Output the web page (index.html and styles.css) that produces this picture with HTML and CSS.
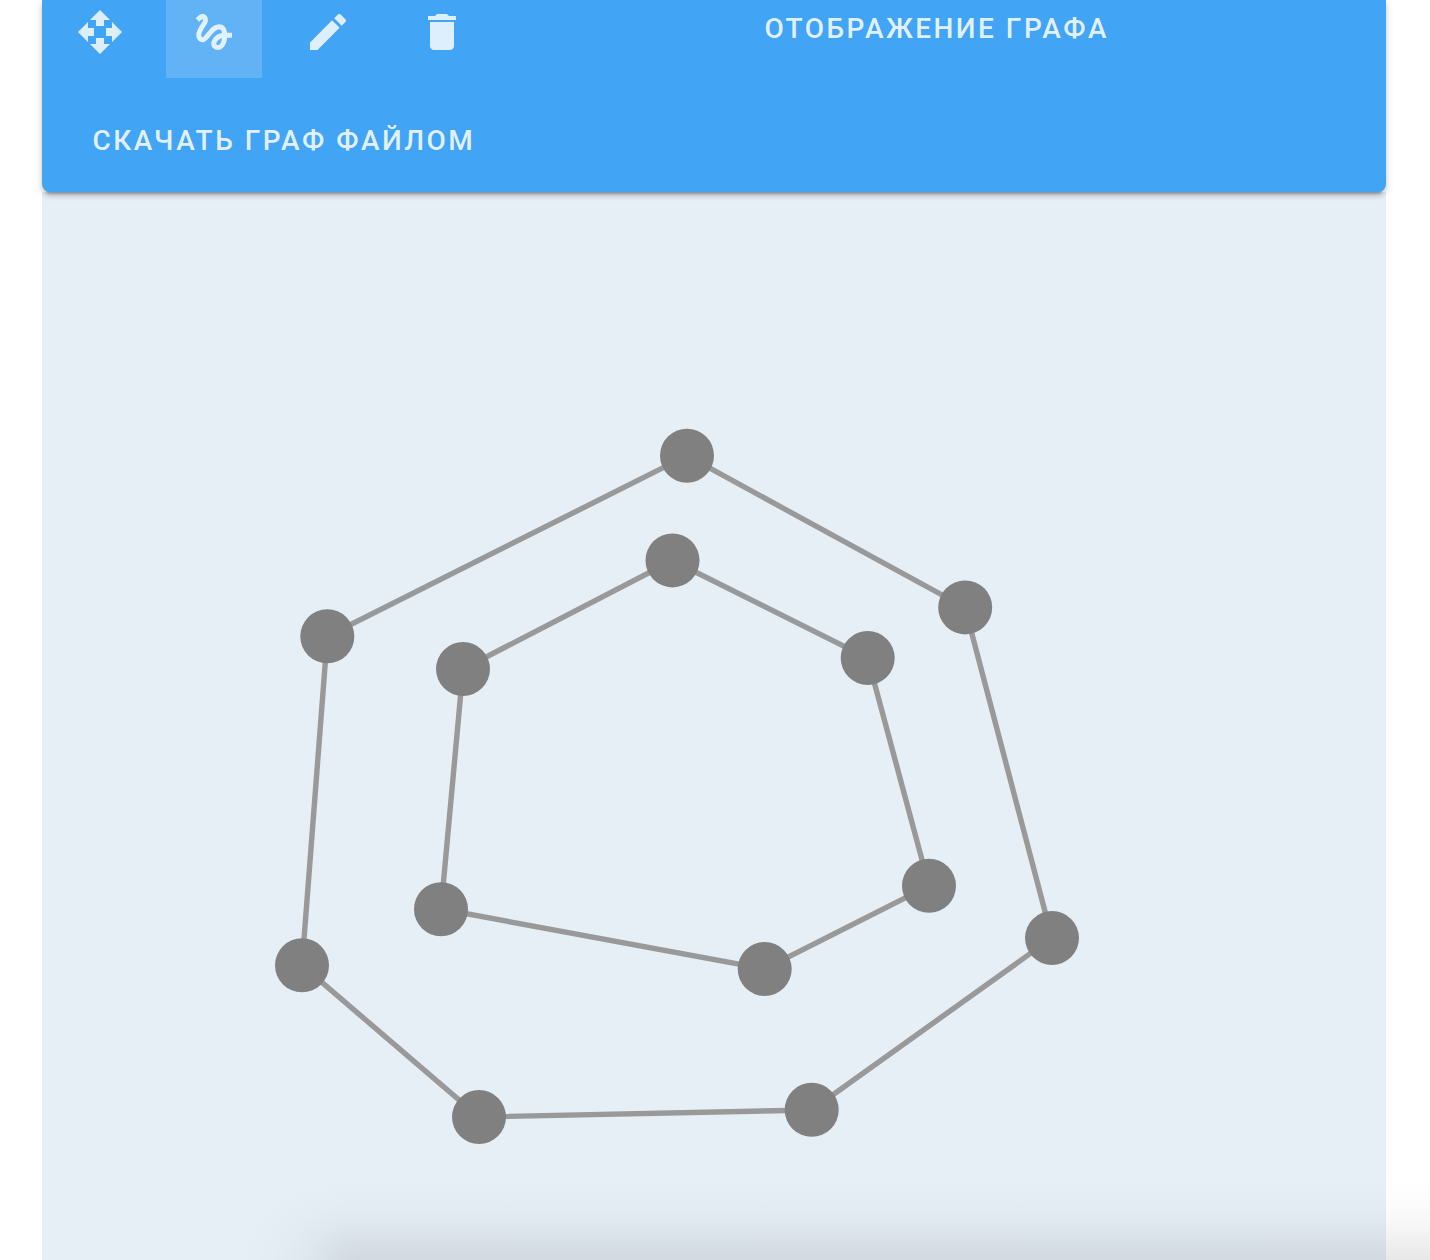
FILE: index.html
```html
<!DOCTYPE html>
<html lang="ru">
<head>
<meta charset="utf-8">
<title>Граф</title>
<link rel="stylesheet" href="styles.css">
</head>
<body>
<main class="editor">
  <header class="toolbar">
    <div class="tools-row">
      <div class="tools">
        <button class="tool" aria-label="Переместить"><svg class="icon" viewBox="0 0 24 24"><path d="M10 9h4V6h3l-5-5-5 5h3v3zm-1 1H6V7l-5 5 5 5v-3h3v-4zm14 2l-5-5v3h-3v4h3v3l5-5zm-9 3h-4v3H7l5 5 5-5h-3v-3z"/></svg></button>
        <button class="tool tool-active" aria-label="Рисовать"><svg class="icon" viewBox="0 0 24 24"><path d="M4.59 6.89c.7-.71 1.4-1.35 1.71-1.22.5.2 0 1.03-.3 1.52-.25.42-2.86 3.89-2.86 6.31 0 1.28.48 2.34 1.34 2.98.75.56 1.74.73 2.64.46 1.07-.31 1.95-1.4 3.06-2.77 1.21-1.49 2.83-3.44 4.08-3.44 1.63 0 1.65 1.01 1.76 1.79-3.78.64-5.38 3.67-5.38 5.37 0 1.7 1.44 3.09 3.21 3.09 1.63 0 4.29-1.33 4.69-6.1H21v-2.5h-2.47c-.15-1.65-1.09-4.2-4.03-4.2-2.25 0-4.18 1.91-4.94 2.84-.58.73-2.06 2.48-2.29 2.72-.25.3-.68.84-1.11.84-.45 0-.72-.83-.36-1.92.35-1.09 1.4-2.86 1.85-3.52.78-1.14 1.3-1.92 1.3-3.28C8.95 3.69 7.31 3 6.44 3 5.12 3 3.97 4 3.72 4.25c-.36.36-.66.66-.88.93l1.75 1.71zm9.29 11.66c-.31 0-.74-.26-.74-.72 0-.6.73-2.2 2.87-2.76-.3 2.69-1.43 3.48-2.13 3.48z"/></svg></button>
        <button class="tool" aria-label="Изменить"><svg class="icon" viewBox="0 0 24 24"><path d="M20.71,7.04C21.1,6.65 21.1,6 20.71,5.63L18.37,3.29C18,2.9 17.35,2.9 16.96,3.29L15.12,5.12L18.87,8.87M3,17.25V21H6.75L17.81,9.93L14.06,6.18L3,17.25Z"/></svg></button>
        <button class="tool" aria-label="Удалить"><svg class="icon" viewBox="0 0 24 24"><path d="M6 19c0 1.1.9 2 2 2h8c1.1 0 2-.9 2-2V7H6v12zM19 4h-3.5l-1-1h-5l-1 1H5v2h14V4z"/></svg></button>
      </div>
      <button class="text-button view-button">Отображение графа</button>
    </div>
    <button class="text-button download-button">Скачать граф файлом</button>
  </header>
  <svg class="graph" viewBox="42 192 1344 1068">
    <g class="edges">
      <path d="M687 455.7 965 607.5 1052 938 811.7 1110 479 1117 302 965.3 327.3 636.3Z"/>
      <path d="M672.5 560.5 867.7 658 929 885.8 764.7 969 441 909 463 669Z"/>
    </g>
    <g class="nodes">
      <circle cx="687" cy="455.7" r="27"/>
      <circle cx="965.2" cy="607.4" r="27"/>
      <circle cx="1052" cy="938" r="27"/>
      <circle cx="811.7" cy="1109.8" r="27"/>
      <circle cx="479" cy="1117" r="27"/>
      <circle cx="302" cy="965.3" r="27"/>
      <circle cx="327.3" cy="636.3" r="27"/>
      <circle cx="672.5" cy="560.4" r="27"/>
      <circle cx="867.7" cy="658" r="27"/>
      <circle cx="929" cy="885.8" r="27"/>
      <circle cx="764.7" cy="969" r="27"/>
      <circle cx="441" cy="909.2" r="27"/>
      <circle cx="463" cy="669" r="27"/>
    </g>
  </svg>
</main>
<div class="panel-shadow"></div>
</body>
</html>
```
FILE: styles.css
```css
body {
  position: relative;
  margin: 0;
  height: 1260px;
  overflow: hidden;
  background: #fff;
  font-family: Roboto, "Liberation Sans", sans-serif;
}

.editor {
  display: flex;
  flex-direction: column;
  width: 1344px;
  height: 1260px;
  margin-left: 42px;
}

.toolbar {
  position: relative;
  z-index: 1;
  box-sizing: border-box;
  flex: none;
  display: flex;
  flex-direction: column;
  align-items: flex-start;
  height: 192px;
  border-radius: 0 0 8px 8px;
  background: #42a4f5;
  box-shadow: 0 6px 2px -4px rgba(0, 0, 0, .2), 0 4px 4px rgba(0, 0, 0, .14), 0 2px 10px rgba(0, 0, 0, .12);
}

.tools-row {
  display: flex;
  height: 112px;
}

.tools {
  display: flex;
  gap: 18px;
  width: 712.5px;
  box-sizing: border-box;
  padding-left: 10px;
  margin-right: 10px;
}

.tool {
  box-sizing: border-box;
  width: 96px;
  height: 78px;
  padding: 8px 24px 22px;
  border: 0;
  background: none;
}

.tool-active {
  background: rgba(255, 255, 255, .17);
}

.icon {
  display: block;
  width: 48px;
  height: 48px;
  fill: rgba(255, 255, 255, .82);
}

.text-button {
  height: 58px;
  padding: 0;
  border: 0;
  background: none;
  color: rgba(255, 255, 255, .86);
  font: 500 28px/58px Roboto, "Liberation Sans", sans-serif;
  letter-spacing: 2.48px;
  text-transform: uppercase;
  white-space: nowrap;
}

.download-button {
  margin-left: 50.5px;
}

.graph {
  flex: none;
  display: block;
  width: 1344px;
  height: 1068px;
  background: #e6eef6;
}

.edges {
  fill: none;
  stroke: #999;
  stroke-width: 5.4;
}

.nodes {
  fill: #808080;
}

/* Soft shadow cast by the panel below the fold */
.panel-shadow {
  position: absolute;
  inset: 1150px 0 0 200px;
  background:
    radial-gradient(ellipse 120px 82px at 160px 110px, rgba(0, 0, 0, .09), rgba(0, 0, 0, .058) 24%, rgba(0, 0, 0, .032) 43%, rgba(0, 0, 0, .012) 67%, transparent) no-repeat 0 0 / 160px 110px,
    linear-gradient(to top, rgba(0, 0, 0, .09), rgba(0, 0, 0, .058) 19.7px, rgba(0, 0, 0, .032) 35.3px, rgba(0, 0, 0, .012) 55px, transparent 82px) no-repeat 160px 0 / 1070px 110px;
}
```
